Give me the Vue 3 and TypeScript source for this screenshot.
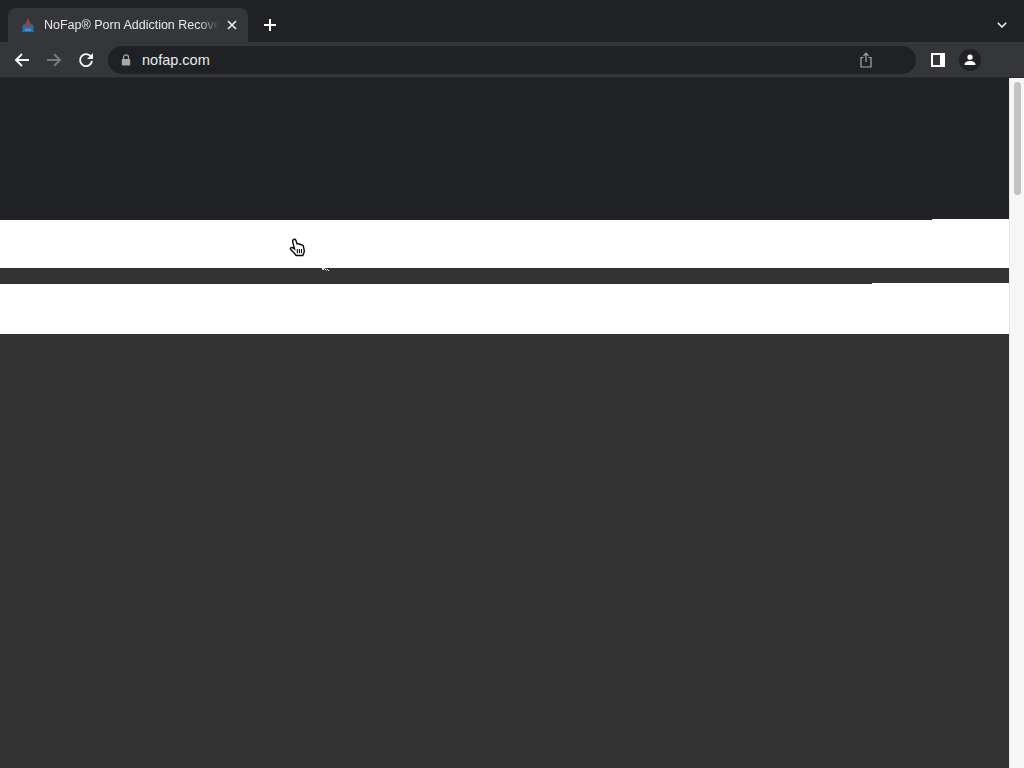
<script setup lang="ts">
const title = 'NoFap® Porn Addiction Recovery'
const url = 'nofap.com'
</script>

<template>
  <div class="window">
    <header class="tabstrip">
      <div class="tab">
        <svg class="favicon" viewBox="0 0 16 16" width="16" height="16">
          <path d="M2 15 L3 8 L6 6.5 L10 6.5 L13 8 L14 15 Z" fill="#2a6da8" />
          <path d="M8 1 L10.5 6 L9.5 10 L6.5 10 L5.5 6 Z" fill="#9a3f3e" />
          <path d="M5 11.5h6v2.5H5z" fill="#4c8fc4" />
        </svg>
        <span class="tab-title">{{ title }}</span>
        <svg class="tab-close" viewBox="0 0 10 10" width="10" height="10">
          <path d="M1 1 L9 9 M9 1 L1 9" stroke="#e8eaed" stroke-width="1.7" fill="none" />
        </svg>
      </div>
      <svg class="new-tab" viewBox="0 0 12 12" width="12" height="12">
        <path d="M6 0 V12 M0 6 H12" stroke="#fff" stroke-width="2" fill="none" />
      </svg>
      <svg class="tab-menu" viewBox="0 0 10 6" width="10" height="6">
        <path d="M0.8 0.8 L5 5 L9.2 0.8" stroke="#e8eaed" stroke-width="1.6" fill="none" />
      </svg>
    </header>

    <nav class="toolbar">
      <svg class="nav-icon" viewBox="0 0 16 16" width="16" height="16">
        <path d="M15 8 H2 M8 2 L2 8 L8 14" stroke="#f1f3f4" stroke-width="2" fill="none" />
      </svg>
      <svg class="nav-icon" viewBox="0 0 16 16" width="16" height="16">
        <path d="M1 8 H14 M8 2 L14 8 L8 14" stroke="#77797c" stroke-width="2" fill="none" />
      </svg>
      <svg class="nav-icon" viewBox="0 0 16 16" width="16" height="16">
        <path d="M13.2 5 A6 6 0 1 0 14 9" stroke="#f1f3f4" stroke-width="1.9" fill="none" />
        <path d="M15 1 V7 H9 Z" fill="#f1f3f4" />
      </svg>
      <div class="omnibox">
        <svg class="lock" viewBox="0 0 10 12" width="10" height="12">
          <path d="M2.5 5 V3.4 a2.5 2.5 0 0 1 5 0 V5" stroke="#a6a8ab" stroke-width="1.2" fill="none" />
          <rect x="0.8" y="5" width="8.4" height="6.6" rx="1" fill="#a6a8ab" />
        </svg>
        <span class="url">{{ url }}</span>
        <svg class="share" viewBox="0 0 12 16" width="12" height="16">
          <path d="M3.5 5.5 H1 V15 H11 V5.5 H8.5" stroke="#a6a8ab" stroke-width="1.2" fill="none" />
          <path d="M6 10 V1.5 M3.5 3.8 L6 1.2 L8.5 3.8" stroke="#a6a8ab" stroke-width="1.2" fill="none" />
        </svg>
      </div>
      <svg class="panel" viewBox="0 0 14 14" width="14" height="14">
        <path d="M0 0 H14 V14 H0 Z M2 2 V12 H9 V2 Z" fill="#fff" fill-rule="evenodd" />
      </svg>
      <div class="avatar">
        <svg viewBox="0 0 12 12" width="12" height="12">
          <circle cx="6" cy="3.2" r="2.6" fill="#fff" />
          <path d="M0.5 11 C0.5 8 3 7 6 7 C9 7 11.5 8 11.5 11 Z" fill="#fff" />
        </svg>
      </div>
    </nav>

    <div class="viewport">
      <main class="page">
        <section class="band band-top"></section>
        <section class="band band-white band-first"></section>
        <section class="band band-gap">
          <svg class="stray-cursor" viewBox="0 0 10 8" width="10" height="8">
            <path d="M1 0 L3 6 L4.2 4 L6.5 6.5 M7 5 L9 7" stroke="#fff" stroke-width="1" fill="none" />
          </svg>
        </section>
        <section class="band band-white band-second"></section>
        <section class="band band-rest"></section>
        <svg class="hand" viewBox="0 0 16 18" width="17" height="19">
          <path d="M4.2 1.6 C5 .8 6 1.2 6.3 2 L7.6 5.6 C8.4 5.2 9.2 5.4 9.6 6 C10.4 5.6 11.2 5.9 11.5 6.6 C12.4 6.3 13.4 6.9 13.6 7.9 L14.4 12 C14.6 13.6 13.9 15 13 16.6 H6.8 C5.4 14.8 3.8 13 1.6 10.9 C1 10.2 1.4 9 2.6 9 C3.4 9 4.3 9.7 5.2 10.4 L3.4 3.4 C3.2 2.6 3.6 2 4.2 1.6 Z" fill="#fff" stroke="#000" stroke-width="1.3" />
          <path d="M7.8 10.5 V14.5 M9.8 10.5 V14.5 M11.8 10.5 V14.5" stroke="#000" stroke-width="1" fill="none" />
        </svg>
      </main>
      <aside class="scrollbar">
        <div class="thumb"></div>
      </aside>
    </div>
  </div>
</template>

<style scoped>
.window {
  width: 1024px;
  height: 768px;
  display: flex;
  flex-direction: column;
  overflow: hidden;
  background: #333333;
  font-family: "Liberation Sans", Arial, sans-serif;
}
.tabstrip {
  height: 42px;
  flex: none;
  display: flex;
  align-items: flex-end;
  background: #202124;
  padding-left: 8px;
  position: relative;
}
.tab {
  width: 240px;
  height: 34px;
  box-sizing: border-box;
  display: flex;
  align-items: center;
  padding: 0 11px 1px 12px;
  background: #35363a;
  border-radius: 8px 8px 0 0;
}
.favicon { flex: none; margin-right: 8px; }
.tab-title {
  flex: 1;
  min-width: 0;
  overflow: hidden;
  white-space: nowrap;
  font-size: 12.5px;
  color: #e8eaed;
  -webkit-mask-image: linear-gradient(to right, #000 88%, transparent 100%);
  mask-image: linear-gradient(to right, #000 88%, transparent 100%);
}
.tab-close { flex: none; margin-left: 8px; }
.new-tab { flex: none; margin: 0 0 11px 16px; }
.tab-menu { position: absolute; right: 17px; top: 22px; }

.toolbar {
  height: 36px;
  flex: none;
  box-sizing: border-box;
  display: flex;
  align-items: center;
  gap: 16px;
  padding: 0 43px 0 14px;
  background: #35363a;
  border-bottom: 1px solid #2a2b2e;
}
.nav-icon { flex: none; }
.omnibox {
  flex: 1;
  height: 28px;
  margin-left: -2px;
  margin-right: -1px;
  display: flex;
  align-items: center;
  padding: 0 44px 0 13px;
  border-radius: 14px;
  background: #202124;
}
.lock { flex: none; margin-right: 11px; }
.url { flex: 1; font-size: 14.5px; color: #e8eaed; }
.share { flex: none; }
.panel { flex: none; }
.avatar {
  flex: none;
  width: 22px;
  height: 22px;
  margin-left: -2px;
  border-radius: 50%;
  background: #202124;
  display: flex;
  align-items: center;
  justify-content: center;
}

.viewport { flex: 1; min-height: 0; display: flex; }
.page {
  flex: 1;
  min-width: 0;
  display: flex;
  flex-direction: column;
  position: relative;
}
.band { flex: none; position: relative; }
.band-top { height: 142px; background: #212225; }
.band-white { background: #fff; }
.band-first { height: 48px; }
.band-first::before {
  content: "";
  position: absolute;
  left: 932px;
  right: 0;
  top: -1px;
  height: 1px;
  background: #fff;
}
.band-gap { height: 16px; background: #333333; }
.band-second { height: 50px; }
.band-second::before {
  content: "";
  position: absolute;
  left: 872px;
  right: 0;
  top: -1px;
  height: 1px;
  background: #fff;
}
.band-rest { flex: 1; background: #333333; }
.hand { position: absolute; left: 289px; top: 160px; }
.stray-cursor { position: absolute; left: 320px; top: -4px; }
.scrollbar {
  width: 15px;
  flex: none;
  box-sizing: border-box;
  padding: 4px 3px 0 4px;
  background: #f6f6f6;
  border-left: 1px solid #e8e8e8;
}
.thumb { height: 113px; border-radius: 4px; background: #c2c2c2; }
</style>
